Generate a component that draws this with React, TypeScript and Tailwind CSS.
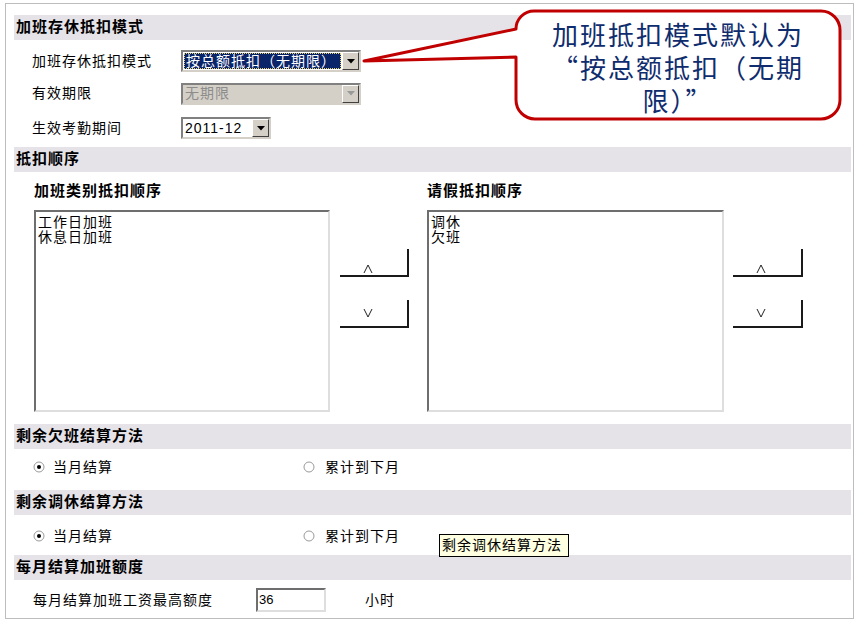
const cjk = "font-['Liberation_Sans','Noto_Sans_CJK_SC',sans-serif]";

const Arrow = ({ disabled }: { disabled?: boolean }) => (
  <div className="flex h-full w-[17px] items-center justify-center border border-t-white border-l-white border-r-[#404040] border-b-[#404040] bg-[#d4d0c8]">
    <svg width="8" height="5" viewBox="0 0 8 5">
      <polygon points="0,0 8,0 4,4.5" fill={disabled ? "#9a9a9a" : "#000"} />
    </svg>
  </div>
);

const Dropdown = ({
  value,
  width,
  selected,
  disabled,
}: {
  value: string;
  width: string;
  selected?: boolean;
  disabled?: boolean;
}) => (
  <div
    className={`flex h-[22px] ${width} border-2 border-t-[#808080] border-l-[#808080] border-r-[#d4d0c8] border-b-[#d4d0c8] ${
      disabled ? "bg-[#d4d0c8]" : "bg-white"
    }`}
  >
    <div className="flex min-w-0 flex-1 items-center p-[1px]">
      <div
        className={`flex h-full w-full items-center pl-[1px] text-[14px] tracking-[1px] ${
          selected
            ? "border border-dotted border-[#e8d070] bg-[#0a246a] text-white"
            : disabled
              ? "text-[#8c8c8c]"
              : "text-black"
        }`}
      >
        {value}
      </div>
    </div>
    <Arrow disabled={disabled} />
  </div>
);

const Header = ({ title }: { title: string }) => (
  <div className="flex h-[25px] items-center bg-[#e6e3e8] pl-[2px] text-[15px] font-bold tracking-[1px]">
    {title}
  </div>
);

const Radio = ({ checked }: { checked?: boolean }) => (
  <svg width="12" height="12" viewBox="0 0 12 12">
    <circle cx="6" cy="6" r="5" fill="#fff" stroke="#9a9a9a" strokeWidth="1" />
    {checked && <circle cx="6" cy="6" r="2" fill="#000" />}
  </svg>
);

const RadioRow = () => (
  <div className="flex h-[16px] items-center text-[14px] tracking-[1px]">
    <div className="ml-[19px] flex items-center gap-[8px]">
      <Radio checked />
      <span>当月结算</span>
    </div>
    <div className="ml-[190px] flex items-center gap-[10px]">
      <Radio />
      <span>累计到下月</span>
    </div>
  </div>
);

const MoveButton = ({ up }: { up?: boolean }) => (
  <div className="relative h-[28px] w-full border-r-2 border-b-2 border-[#1a1a1a] bg-white">
    <svg
      className={`absolute left-[23px] ${up ? "top-[15px]" : "top-[8px]"}`}
      width="10"
      height="10"
      viewBox="0 0 10 10"
    >
      <polyline
        points={up ? "1,9 5,1 9,9" : "1,1 5,9 9,1"}
        fill="none"
        stroke="#222"
        strokeWidth="1"
      />
    </svg>
  </div>
);

const OrderColumn = ({
  title,
  items,
  listWidth,
  btnWidth,
  gap,
}: {
  title: string;
  items: string[];
  listWidth: string;
  btnWidth: string;
  gap: string;
}) => (
  <div className="flex">
    <div className="flex flex-col">
      <div className="flex h-[38px] items-center text-[15px] font-bold tracking-[1px]">
        {title}
      </div>
      <div
        className={`h-[202px] ${listWidth} border-2 border-t-[#6e6e6e] border-l-[#6e6e6e] border-r-[#dedede] border-b-[#dedede] pl-[2px] pt-[3px] text-[14px] leading-[15px] tracking-[1px]`}
      >
        {items.map((it) => (
          <div key={it}>{it}</div>
        ))}
      </div>
    </div>
    <div className={`${gap} ${btnWidth} flex flex-col pt-[77px]`}>
      <MoveButton up />
      <div className="h-[23px]" />
      <MoveButton />
    </div>
  </div>
);

export default function App() {
  return (
    <div className={`relative h-[626px] w-[858px] bg-white pl-[5px] pt-[3px] text-black ${cjk}`}>
      <div className="h-[616px] w-[849px] border border-[#bdbdbd] pl-[8px] pr-[2px] pt-[11px]">
        <Header title="加班存休抵扣模式" />
        <div className="flex h-[107px] flex-col pl-[18px] text-[14px] tracking-[1px]">
          <div className="mt-[10px] flex h-[22px] items-center">
            <div className="w-[149px]">加班存休抵扣模式</div>
            <Dropdown value="按总额抵扣（无期限）" width="w-[180px]" selected />
          </div>
          <div className="mt-[10px] flex h-[23px] items-center">
            <div className="w-[149px]">有效期限</div>
            <Dropdown value="无期限" width="w-[180px]" disabled />
          </div>
          <div className="mt-[12px] flex h-[22px] items-center">
            <div className="w-[149px]">生效考勤期间</div>
            <Dropdown value="2011-12" width="w-[90px]" />
          </div>
        </div>

        <Header title="抵扣顺序" />
        <div className="flex h-[252px] pl-[20px]">
          <OrderColumn
            title="加班类别抵扣顺序"
            items={["工作日加班", "休息日加班"]}
            listWidth="w-[296px]"
            btnWidth="w-[69px]"
            gap="ml-[10px]"
          />
          <div className="ml-[18px]">
            <OrderColumn
              title="请假抵扣顺序"
              items={["调休", "欠班"]}
              listWidth="w-[297px]"
              btnWidth="w-[70px]"
              gap="ml-[9px]"
            />
          </div>
        </div>

        <Header title="剩余欠班结算方法" />
        <div className="h-[41px] pt-[10px]">
          <RadioRow />
        </div>

        <Header title="剩余调休结算方法" />
        <div className="h-[40px] pt-[13px]">
          <RadioRow />
        </div>

        <Header title="每月结算加班额度" />
        <div className="flex h-[38px] items-start pt-[8px] text-[14px] tracking-[1px]">
          <div className="flex h-[24px] items-center">
            <div className="ml-[19px] w-[223px]">每月结算加班工资最高额度</div>
            <div className="flex h-[24px] w-[70px] items-center border-2 border-t-[#6e6e6e] border-l-[#6e6e6e] border-r-[#dedede] border-b-[#dedede] pl-[1px] text-[13px] tracking-normal">
              36
            </div>
            <div className="ml-[39px]">小时</div>
          </div>
        </div>
      </div>

      {/* tooltip */}
      <div className="absolute left-[439px] top-[534px] flex h-[23px] w-[130px] items-center border border-black bg-[#ffffe1] pl-[2px] text-[14px] tracking-[1px]">
        剩余调休结算方法
      </div>

      {/* callout */}
      <svg className="pointer-events-none absolute left-0 top-0" width="858" height="626" viewBox="0 0 858 626">
        <path
          d="M 534 11 H 821 A 19 19 0 0 1 840 30 V 100 A 19 19 0 0 1 821 119 H 535 A 19 19 0 0 1 516 100 V 57 L 364 61 L 516 29 A 18 18 0 0 1 534 11 Z"
          fill="#fff"
          stroke="#c00000"
          strokeWidth="3"
          strokeLinejoin="round"
        />
      </svg>
      <div className="absolute left-[516px] top-[17px] w-[324px] text-center font-['Noto_Sans_CJK_SC',sans-serif] text-[26px] leading-[33px] tracking-[2px] text-[#0f2c6e]">
        加班抵扣模式默认为
        <br />
        “按总额抵扣（无期
        <br />
        限）”
      </div>
    </div>
  );
}
